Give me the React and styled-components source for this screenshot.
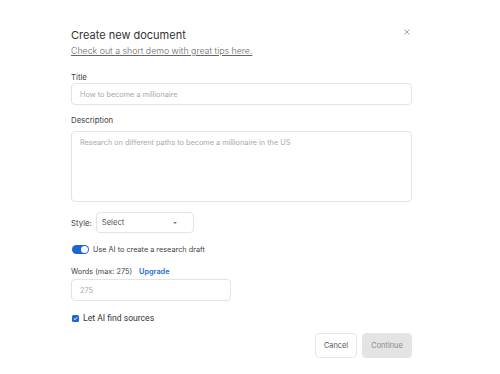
import styled, { createGlobalStyle } from "styled-components";

const Global = createGlobalStyle`
  html, body { margin: 0; padding: 0; background: #fff; }
  body { font-family: Inter, "Noto Sans", sans-serif; color: #333; }
  * { box-sizing: border-box; }
`;

const Modal = styled.div`
  width: 500px;
  height: 374px;
  padding: 28px 88px 0 71px;
  position: relative;
  display: flex;
  flex-direction: column;
`;

const Heading = styled.h1`
  margin: 0;
  font-size: 11px;
  line-height: 14px;
  font-weight: 400;
  color: #333;
`;

const DemoLink = styled.a`
  margin-top: 4px;
  font-size: 8.8px;
  line-height: 10px;
  color: #666;
  font-weight: 300;
  text-decoration: underline;
  text-underline-offset: 1px;
`;

const Label = styled.div`
  margin-top: ${(p) => p.$top}px;
  font-size: ${(p) => p.$size || 7.8}px;
  line-height: 10px;
  color: #444;
  display: flex;
  gap: 7px;
`;

const Upgrade = styled.span`
  color: #2468d8;
  font-weight: 600;
`;

const Input = styled.input`
  margin-top: ${(p) => p.$top}px;
  width: ${(p) => p.$w}px;
  height: 22px;
  border: 1px solid #e3e3e3;
  border-radius: 4px;
  padding: 0 8px;
  font-family: inherit;
  font-size: 7.3px;
  color: #333;
  outline: none;
  &::placeholder { color: #a8a8a8; }
`;

const Area = styled.textarea`
  margin-top: 6px;
  width: 341px;
  height: 71px;
  border: 1px solid #e3e3e3;
  border-radius: 4px;
  padding: 6px 8px;
  font-family: inherit;
  font-size: 7.3px;
  resize: none;
  outline: none;
  &::placeholder { color: #a8a8a8; }
`;

const Row = styled.div`
  margin-top: ${(p) => p.$top}px;
  display: flex;
  align-items: center;
  gap: ${(p) => p.$gap || 6}px;
  font-size: ${(p) => p.$size || 7.8}px;
  color: #444;
`;

const Select = styled.div`
  width: 98px;
  height: 21px;
  border: 1px solid #e3e3e3;
  border-radius: 4px;
  padding: 0 16px 0 5px;
  display: flex;
  align-items: center;
  justify-content: space-between;
  color: #555;
  font-size: 7.6px;
`;

const Caret = styled.span`
  width: 0;
  height: 0;
  border-left: 2.5px solid transparent;
  border-right: 2.5px solid transparent;
  border-top: 2.5px solid #777;
`;

const Toggle = styled.span`
  width: 17px;
  height: 9px;
  border-radius: 5px;
  background: #1b66d6;
  position: relative;
  margin-left: 1px;
  &::after {
    content: "";
    position: absolute;
    right: 1px;
    top: 1px;
    width: 7px;
    height: 7px;
    border-radius: 50%;
    background: #fff;
  }
`;

const Check = styled.span`
  width: 7px;
  height: 7px;
  border-radius: 1.5px;
  background: #1b66d6;
  display: flex;
  align-items: center;
  justify-content: center;
  margin-left: 1px;
`;

const CheckText = styled.span`
  font-family: Roboto, "Liberation Sans", sans-serif;
  font-size: 8.6px;
  color: #333;
`;

const Actions = styled.div`
  margin-top: 10px;
  display: flex;
  justify-content: flex-end;
  gap: 5px;
`;

const Button = styled.button`
  height: 25px;
  width: ${(p) => p.$w}px;
  border-radius: 4px;
  font-family: inherit;
  font-size: 7.4px;
  border: 1px solid ${(p) => (p.$primary ? "#e4e4e4" : "#e6e6e6")};
  background: ${(p) => (p.$primary ? "#e4e4e4" : "#fff")};
  color: ${(p) => (p.$primary ? "#8a8a8a" : "#555")};
`;

const Close = styled.svg`
  position: absolute;
  left: 404px;
  top: 29px;
`;

export default function App() {
  return (
    <>
      <Global />
      <Modal>
        <Close width="6" height="6" viewBox="0 0 6 6">
          <path d="M0.5 0.5L5.5 5.5M5.5 0.5L0.5 5.5" stroke="#999" strokeWidth="0.9" />
        </Close>
        <Heading>Create new document</Heading>
        <DemoLink>Check out a short demo with great tips here.</DemoLink>
        <Label $top={16}>Title</Label>
        <Input $top={1} $w={341} placeholder="How to become a millionaire" />
        <Label $top={10}>Description</Label>
        <Area placeholder="Research on different paths to become a millionaire in the US" />
        <Row $top={10} $gap={4}>
          <span>Style:</span>
          <Select>
            <span>Select</span>
            <Caret />
          </Select>
        </Row>
        <Row $top={12} $gap={4} $size={7.3}>
          <Toggle />
          <span>Use AI to create a research draft</span>
        </Row>
        <Label $top={13} $size={7.3}>
          <span>Words (max: 275)</span>
          <Upgrade>Upgrade</Upgrade>
        </Label>
        <Input $top={2} $w={160} placeholder="275" />
        <Row $top={12} $gap={4}>
          <Check>
            <svg width="5" height="5" viewBox="0 0 5 5">
              <path d="M0.8 2.6L2 3.7L4.2 1.2" stroke="#fff" strokeWidth="1" fill="none" />
            </svg>
          </Check>
          <CheckText>Let AI find sources</CheckText>
        </Row>
        <Actions>
          <Button $w={42}>Cancel</Button>
          <Button $w={50} $primary>Continue</Button>
        </Actions>
      </Modal>
    </>
  );
}
